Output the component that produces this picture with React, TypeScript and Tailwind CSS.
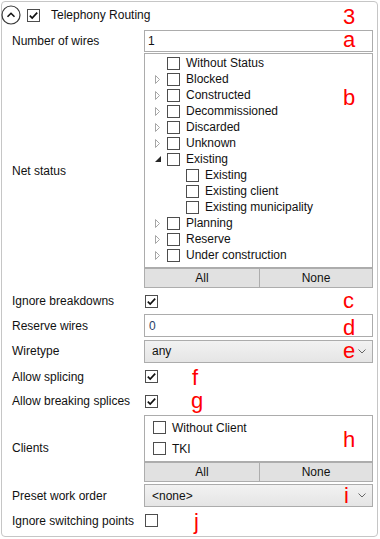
import React from "react";

const font = { fontFamily: '"Liberation Sans", Arial, sans-serif' };

function Check({ checked = false }: { checked?: boolean }) {
  return (
    <div className="w-[13px] h-[13px] border border-[#4d4d4d] bg-white flex items-center justify-center shrink-0">
      {checked && (
        <svg width="11" height="11" viewBox="0 0 11 11">
          <path d="M1.8 5.6 L4.2 8 L9.2 2.6" fill="none" stroke="#111" strokeWidth="1.7" />
        </svg>
      )}
    </div>
  );
}

function Arrow({ open }: { open?: boolean }) {
  if (open) {
    return (
      <svg width="6" height="6" viewBox="0 0 6 6">
        <polygon points="6,0 6,6 0,6" fill="#262626" />
      </svg>
    );
  }
  return (
    <svg width="6" height="9" viewBox="0 0 6 9">
      <path d="M0.5 0.5 L4.5 4.5 L0.5 8.5 Z" fill="none" stroke="#a6a6a6" />
    </svg>
  );
}

type Node = { label: string; arrow?: "closed" | "open"; child?: boolean };

const netStatus: Node[] = [
  { label: "Without Status" },
  { label: "Blocked", arrow: "closed" },
  { label: "Constructed", arrow: "closed" },
  { label: "Decommissioned", arrow: "closed" },
  { label: "Discarded", arrow: "closed" },
  { label: "Unknown", arrow: "closed" },
  { label: "Existing", arrow: "open" },
  { label: "Existing", child: true },
  { label: "Existing client", child: true },
  { label: "Existing municipality", child: true },
  { label: "Planning", arrow: "closed" },
  { label: "Reserve", arrow: "closed" },
  { label: "Under construction", arrow: "closed" },
];

function Buttons() {
  return (
    <div className="flex h-[20px]">
      <button className="w-[116px] h-full bg-[#e1e1e1] border border-[#adadad] text-[12px] text-[#111]">All</button>
      <button className="flex-1 h-full bg-[#e1e1e1] border border-l-0 border-[#adadad] text-[12px] text-[#111]">None</button>
    </div>
  );
}

function Combo({ value }: { value: string }) {
  return (
    <div className="h-[23px] w-full border border-[#acacac] bg-gradient-to-b from-[#f2f2f2] to-[#e5e5e5] flex items-center pl-[7px] pr-[6px] text-[12px] text-[#111]">
      <span className="flex-1">{value}</span>
      <svg width="8" height="5" viewBox="0 0 8 5">
        <path d="M0.5 0.5 L4 4 L7.5 0.5" fill="none" stroke="#666" />
      </svg>
    </div>
  );
}

function Row({ label, h, children, className = "" }: { label: string; h: string; children: React.ReactNode; className?: string }) {
  return (
    <div className={`flex ${h}`}>
      <div className="w-[142px] pl-[10px] flex items-center text-[12px] text-[#111]">{label}</div>
      <div className={`w-[229px] flex ${className}`}>{children}</div>
    </div>
  );
}

const marks = [
  { t: "3", x: "left-[341px]", y: "top-[4px]" },
  { t: "a", x: "left-[341px]", y: "top-[27px]" },
  { t: "b", x: "left-[341px]", y: "top-[85px]" },
  { t: "c", x: "left-[341px]", y: "top-[288px]" },
  { t: "d", x: "left-[341px]", y: "top-[315px]" },
  { t: "e", x: "left-[341px]", y: "top-[338px]" },
  { t: "f", x: "left-[190px]", y: "top-[365px]" },
  { t: "g", x: "left-[189px]", y: "top-[388px]" },
  { t: "h", x: "left-[341px]", y: "top-[427px]" },
  { t: "i", x: "left-[342px]", y: "top-[483px]" },
  { t: "j", x: "left-[192px]", y: "top-[509px]" },
];

export default function App() {
  return (
    <div className="w-[380px] h-[539px] bg-white pt-px pl-px" style={font}>
      <div className="relative w-[377px] h-[536px] border border-[#c6c6c6] rounded-[4px] bg-white">
        {/* header */}
        <div className="flex items-center h-[26px]">
          <svg width="20" height="20" viewBox="0 0 20 20" className="-ml-px">
            <circle cx="10" cy="10" r="9" fill="white" stroke="#3a3a3a" strokeWidth="1.2" />
            <path d="M6.5 11.8 L10 8.3 L13.5 11.8" fill="none" stroke="#111" strokeWidth="1.6" />
          </svg>
          <div className="ml-[6px]">
            <Check checked />
          </div>
          <span className="ml-[11px] text-[12px] text-[#111]">Telephony Routing</span>
        </div>

        <Row label="Number of wires" h="h-[25px]" className="items-start pt-[2px]">
          <div className="w-full h-[22px] border border-[#acacac] pl-[3px] pt-[1px] text-[12px] text-[#111]">1</div>
        </Row>

        <Row label="Net status" h="h-[235px]" className="flex-col">
          <div className="h-[215px] border border-[#acacac] bg-white pt-px">
            {netStatus.map((n, i) => (
              <div key={i} className="flex items-center h-[16px] text-[12px] text-[#111]">
                <div className={`${n.child ? "w-[41px]" : "w-[22px]"} flex items-center pl-[10px] shrink-0`}>
                  {n.arrow === "closed" && <Arrow />}
                  {n.arrow === "open" && <Arrow open />}
                </div>
                <Check />
                <span className="ml-[6px]">{n.label}</span>
              </div>
            ))}
          </div>
          <Buttons />
        </Row>

        <Row label="Ignore breakdowns" h="h-[26px]" className="items-center pl-px">
          <Check checked />
        </Row>

        <Row label="Reserve wires" h="h-[24px]" className="items-start">
          <div className="w-full h-[23px] border border-[#acacac] pl-[4px] pt-[2px] text-[12px] text-[#2b3f66]">0</div>
        </Row>

        <Row label="Wiretype" h="h-[26px]" className="items-center">
          <Combo value="any" />
        </Row>

        <Row label="Allow splicing" h="h-[25px]" className="items-center pl-px">
          <Check checked />
        </Row>

        <Row label="Allow breaking splices" h="h-[24px]" className="items-center pl-px">
          <Check checked />
        </Row>

        <Row label="Clients" h="h-[69px]" className="flex-col pt-[2px]">
          <div className="h-[47px] border border-[#acacac] bg-white pt-[1px]">
            {["Without Client", "TKI"].map((c) => (
              <div key={c} className="flex items-center h-[21px] pl-[8px] text-[12px] text-[#111]">
                <Check />
                <span className="ml-[6px]">{c}</span>
              </div>
            ))}
          </div>
          <Buttons />
        </Row>

        <Row label="Preset work order" h="h-[27px]" className="items-center">
          <Combo value="<none>" />
        </Row>

        <Row label="Ignore switching points" h="h-[23px]" className="items-center pl-px">
          <Check />
        </Row>

        {marks.map((m) => (
          <span key={m.t} className={`absolute ${m.x} ${m.y} text-[22px] leading-none text-[#ff0000]`}>
            {m.t}
          </span>
        ))}
      </div>
    </div>
  );
}
